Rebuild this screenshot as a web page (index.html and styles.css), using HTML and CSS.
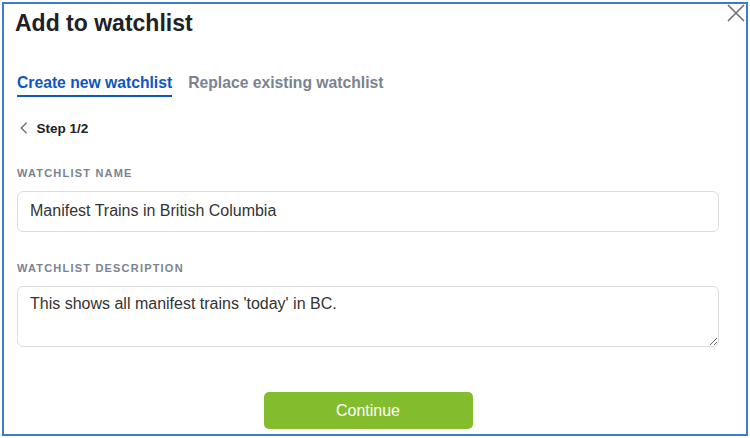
FILE: index.html
```html
<!DOCTYPE html>
<html lang="en">
<head>
<meta charset="utf-8">
<title>Add to watchlist</title>
<link rel="stylesheet" href="styles.css">
</head>
<body>
<div class="frame">
  <button class="close" aria-label="Close">
    <svg width="18" height="18" viewBox="0 0 18 18"><path d="M1 1 L17 17 M17 1 L1 17" stroke="#6f6f6f" stroke-width="1.6" fill="none"/></svg>
  </button>
  <h1 class="title">Add to watchlist</h1>
  <div class="tabs">
    <span class="tab active">Create new watchlist</span>
    <span class="tab">Replace existing watchlist</span>
  </div>
  <div class="step">
    <svg class="chev" width="8" height="12" viewBox="0 0 8 12"><polyline points="6.6,0.8 1.2,6 6.6,11.2" stroke="#666" stroke-width="1.2" fill="none"/></svg>
    <span>Step 1/2</span>
  </div>
  <label class="label" for="wname">Watchlist name</label>
  <input id="wname" class="field" type="text" value="Manifest Trains in British Columbia">
  <label class="label" for="wdesc">Watchlist description</label>
  <textarea id="wdesc" class="field area">This shows all manifest trains 'today' in BC.</textarea>
  <div class="actions">
    <button class="continue">Continue</button>
  </div>
</div>
</body>
</html>
```
FILE: styles.css
```css
html, body {
  margin: 0;
  padding: 0;
  background: #ffffff;
}
body {
  font-family: "Liberation Sans", Arial, sans-serif;
}
.frame {
  position: relative;
  box-sizing: border-box;
  width: 746px;
  height: 434px;
  margin: 2px 0 0 2px;
  border: 2px solid #3d7bd2;
  background: #ffffff;
  padding: 6px 27px 0 13px;
  display: flex;
  flex-direction: column;
  align-items: flex-start;
  overflow: hidden;
}
.close {
  position: absolute;
  top: -0.5px;
  right: 1.5px;
  width: 18px;
  height: 18px;
  padding: 0;
  border: 0;
  background: transparent;
  display: block;
}
.close svg { display: block; }
.title {
  margin: 0 0 0 -2px;
  font-size: 23px;
  line-height: 26px;
  font-weight: 700;
  color: #202124;
}
.tabs {
  display: flex;
  gap: 16px;
  margin-top: 37.5px;
}
.tab {
  font-size: 15.7px;
  line-height: 18px;
  font-weight: 700;
  color: #7b8391;
  padding-bottom: 3px;
  border-bottom: 2px solid transparent;
}
.tab.active {
  color: #0f56c0;
  border-bottom-color: #0f56c0;
}
.step {
  display: flex;
  align-items: center;
  gap: 9px;
  margin-top: 24px;
  margin-left: 2.5px;
  font-size: 13.5px;
  line-height: 15px;
  font-weight: 700;
  color: #222222;
}
.chev { display: block; }
.label {
  margin-top: 31px;
  font-size: 11px;
  line-height: 13px;
  font-weight: 700;
  letter-spacing: 1.2px;
  text-transform: uppercase;
  color: #7a8391;
}
.label + .field { margin-top: 11px; }
.field {
  box-sizing: border-box;
  width: 702px;
  height: 41px;
  border: 1px solid #dcdde2;
  border-radius: 6px;
  padding: 0 12px;
  font-family: "Liberation Sans", Arial, sans-serif;
  font-size: 16px;
  color: #333333;
  background: #ffffff;
  outline: none;
}
.field + .label { margin-top: 30px; }
.area {
  height: 61.5px;
  padding: 8px 12px;
  line-height: 18.4px;
  resize: vertical;
}
.actions {
  align-self: stretch;
  display: flex;
  justify-content: center;
  margin-top: 45px;
}
.continue {
  width: 209px;
  height: 37px;
  border: 0;
  border-radius: 5px;
  background: #83bc2d;
  color: #ffffff;
  font-family: "Liberation Sans", Arial, sans-serif;
  font-size: 16px;
  padding: 0;
}
```
